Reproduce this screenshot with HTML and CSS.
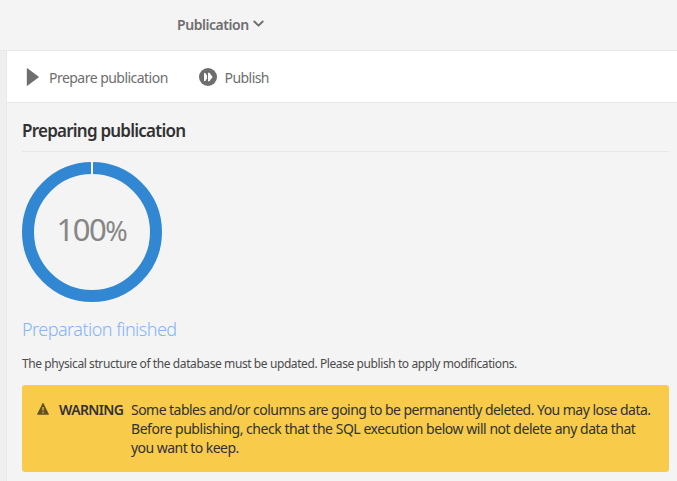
FILE: index.html
```
<!DOCTYPE html>
<html lang="en">
<head>
<meta charset="utf-8">
<title>Publication</title>
<link rel="stylesheet" href="styles.css">
</head>
<body>
<header class="topbar">
  <span class="topbar-title">Publication</span>
  <svg class="chevron" width="11" height="8" viewBox="0 0 11 8"><path d="M1.3 1.5 5.5 5.7 9.7 1.5" fill="none" stroke="#6e6e6e" stroke-width="1.9" stroke-linecap="round" stroke-linejoin="round"/></svg>
</header>
<main class="panel">
  <nav class="toolbar">
    <a class="action prepare">
      <svg width="14" height="18" viewBox="0 0 14 18"><path d="M1.4.2 12.4 8.5Q13 9 12.4 9.5L1.4 17.8Q.8 18 .8 17.4V.6Q.8 0 1.4.2Z" fill="#6e6e6e"/></svg>
      <span class="prepare-label">Prepare publication</span>
    </a>
    <a class="action publish">
      <svg width="18" height="18" viewBox="0 0 18 18"><circle cx="9" cy="9" r="9" fill="#6e6e6e"/><path d="M5 5h1.3L8 7.6v2.8L6.3 13H5ZM9 4.8h1.4L13.6 9l-3.2 4.2H9Z" fill="#fff"/></svg>
      <span class="publish-label">Publish</span>
    </a>
  </nav>
  <section class="content">
    <h1 class="heading">Preparing publication</h1>
    <div class="progress">
      <svg class="ring" width="140" height="140" viewBox="0 0 140 140"><circle cx="70" cy="70" r="64" fill="none" stroke="#3287d2" stroke-width="12"/><path d="M70 0v12" stroke="#fff" stroke-width="2"/></svg>
      <span class="percent"><span class="number">100</span><span class="sign">%</span></span>
    </div>
    <p class="status">Preparation finished</p>
    <p class="description">The physical structure of the database must be updated. Please publish to apply modifications.</p>
    <div class="alert">
      <svg class="alert-icon" width="12" height="12" viewBox="0 0 12 12"><path d="M6 0Q6.3 0 6.6.5L11.8 11Q12.1 11.8 11.4 11.8H.6Q-.1 11.8.2 11L5.4.5Q5.7 0 6 0Z" fill="#635121"/><path d="M5.3 4h1.4v3.6H5.3ZM5.3 8.8h1.4v1.4H5.3Z" fill="#d9b245"/></svg>
      <strong class="alert-label">WARNING</strong>
      <p class="alert-text">Some tables and/or columns are going to be permanently deleted. You may lose data.<br><span class="line-two">Before publishing, check that the SQL execution below will not delete any data that</span><br>you want to keep.</p>
    </div>
  </section>
</main>
</body>
</html>
```
FILE: styles.css
```
* { box-sizing: border-box; }
body {
  margin: 0;
  height: 481px;
  overflow: hidden;
  background: #efefef;
  color: #323232;
  font-family: "Noto Sans", "Open Sans", sans-serif;
  white-space: nowrap;
}
p, h1 { margin: 0; }
svg { display: block; flex: none; }
.topbar {
  display: flex;
  align-items: center;
  height: 51px;
  padding: 0 0 1px 177px;
  background: #f4f4f4;
  border-bottom: 1px solid #e8e8e8;
  color: #6e6e6e;
}
.topbar-title { width: 76px; font-size: 14px; font-weight: 600; letter-spacing: -0.45px; }
.chevron { margin-top: -2px; }
.panel {
  height: 430px;
  margin-left: 6px;
  border-left: 1px solid #e8e8e8;
  background: #f4f4f4;
}
.toolbar {
  display: flex;
  align-items: center;
  height: 52px;
  padding-left: 18px;
  background: #fff;
  border-bottom: 1px solid #e8e8e8;
  color: #6e6e6e;
  font-size: 14px;
}
.toolbar span { padding-top: 2px; }
.action { display: flex; align-items: center; }
.prepare { width: 173.5px; gap: 9px; }
.prepare svg { margin-left: 1px; }
.prepare-label { letter-spacing: -0.53px; }
.publish { gap: 8px; }
.publish-label { letter-spacing: -0.55px; }
.content { padding: 0 8px 0 15px; }
.heading {
  height: 49px;
  padding-top: 16px;
  border-bottom: 1px solid #e8e8e8;
  font-size: 17px;
  line-height: 23px;
  font-weight: 600;
  letter-spacing: -0.77px;
}
.progress {
  display: grid;
  width: 140px;
  height: 140px;
  margin-top: 10px;
  place-items: center;
}
.progress > * { grid-area: 1 / 1; }
.percent { color: #868686; line-height: 38px; }
.number { font-size: 31px; letter-spacing: -1.5px; }
.sign { font-size: 27px; }
.status {
  height: 28px;
  margin-top: 13px;
  color: #82b5fc;
  font-size: 18px;
  line-height: 28px;
  font-weight: 300;
  letter-spacing: -0.52px;
}
.description {
  height: 20px;
  margin-top: 11px;
  color: #4b4b4b;
  font-size: 12px;
  line-height: 20px;
  letter-spacing: -0.41px;
}
.alert {
  display: flex;
  height: 87px;
  margin-top: 11px;
  padding: 15px;
  border-radius: 3px;
  background: #f8cb4b;
  font-size: 14px;
  line-height: 19px;
}
.alert-icon { margin: 3px 10px 0 0; }
.alert-label { flex: none; width: 72px; font-weight: 600; letter-spacing: -0.65px; }
.alert-text { letter-spacing: -0.54px; }
.line-two { letter-spacing: -0.47px; }
```
